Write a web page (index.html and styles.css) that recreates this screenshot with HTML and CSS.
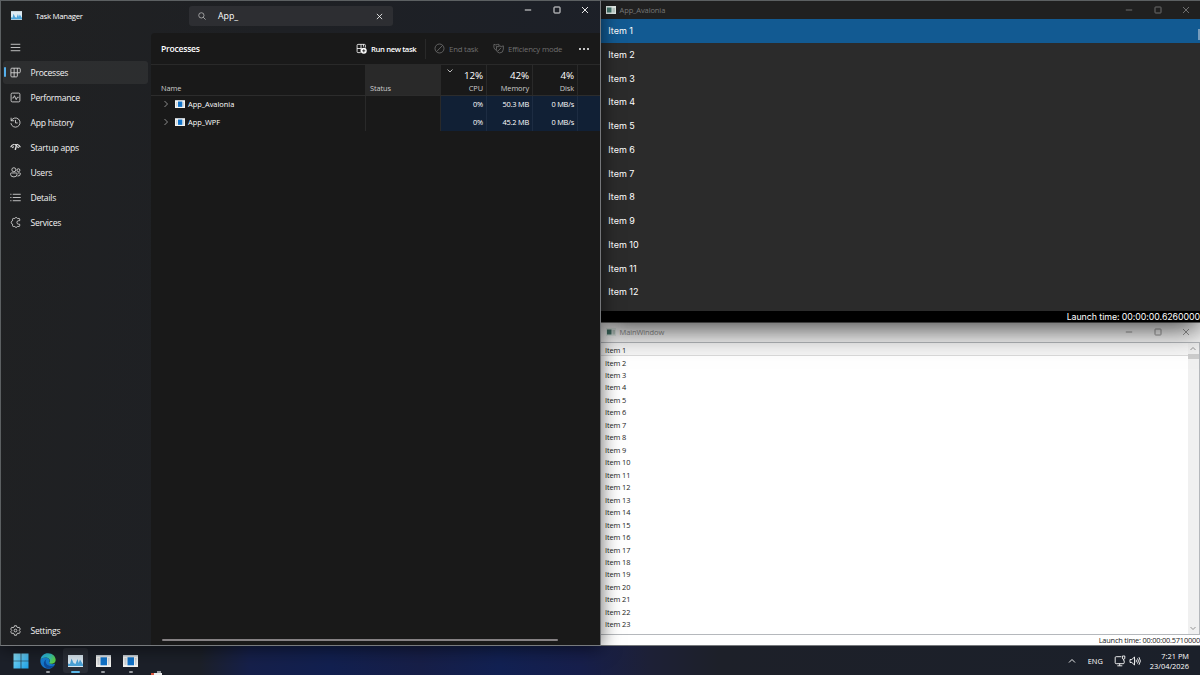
FILE: index.html
```html
<!DOCTYPE html>
<html lang="en">
<head>
  <meta charset="UTF-8" />
  <meta name="viewport" content="width=device-width, initial-scale=1.0"/>
  <title>Desktop</title>
  <link rel="stylesheet" href="styles.css">
</head>
<body>
  <svg class="defs" width="0" height="0">
    <symbol id="min" viewBox="0 0 8 8"><path d="M.8 4h6.400"/></symbol>
    <symbol id="max" viewBox="0 0 8 8"><rect x="1" y="1" width="6" height="6" rx=".6"/></symbol>
    <symbol id="close" viewBox="0 0 8 8"><path d="M1 1l6 6M7 1L1 7"/></symbol>
    <symbol id="chev" viewBox="0 0 8 8"><path d="M2.500 1L5.500 4 2.500 7"/></symbol>
    <symbol id="app" viewBox="0 0 15 12">
      <rect width="15" height="12" fill="#f4f4f2"/><rect width="15" height="1.500" fill="#c3cad0"/>
      <rect x="1.500" y="3" width="2" height="7" fill="#cfd4d8"/><rect x="12" y="3" width="1.500" height="7" fill="#cfd4d8"/>
      <rect x="4.500" y="2.300" width="6.500" height="8" fill="#1173c9"/>
    </symbol>
    <symbol id="chart" viewBox="0 0 15 12">
      <rect width="15" height="12" fill="#dceaf3"/>
      <path d="M0 11V8.500l2 .5 1.500-5.500L5.500 8 7.500 9l2-5 1.200 4L12 4.500l3 5V11z" fill="#4ba3d8"/>
    </symbol>
    <symbol id="win" viewBox="0 0 10 8">
      <rect width="10" height="8" fill="#dfe8e4"/><rect x="1" y="1.500" width="4.500" height="5" fill="#44756a"/>
      <rect x="6.500" y="2" width="2.500" height="4.500" fill="#b9c8c2"/>
    </symbol>
  </svg>

  <div class="desktop">
    <div class="window task-manager">
      <div class="tm-titlebar">
        <svg class="tm-logo"><use href="#chart"/></svg>
        <span class="tm-title">Task Manager</span>
        <div class="search">
          <svg class="icon" viewBox="0 0 10 10"><circle cx="4.200" cy="4.200" r="3.300"/><path d="M6.500 6.500L9.500 9.500"/></svg>
          <span>App_</span>
          <svg class="clear"><use href="#close"/></svg>
        </div>
        <div class="controls">
          <svg><use href="#min"/></svg>
          <svg><use href="#max"/></svg>
          <svg><use href="#close"/></svg>
        </div>
      </div>

      <div class="tm-body">
        <nav class="sidebar">
          <div class="nav-item menu">
            <svg class="icon" viewBox="0 0 12 12"><path d="M.8 2.500h10.400M.8 6h10.400M.8 9.500h10.400"/></svg>
          </div>
          <div class="nav-item active">
            <svg class="icon" viewBox="0 0 12 12"><path d="M2 1.300h8.200q1 0 1 1v3q0 1-1 1H8v3.500q0 1-1 1H2q-1 0-1-1V2.300q0-1 1-1zM4.500 1.300v9.500M8 1.300v5M1 6.300h7"/></svg>
            <span>Processes</span>
          </div>
          <div class="nav-item">
            <svg class="icon" viewBox="0 0 12 12"><rect x="1.200" y="1.200" width="9.600" height="9.600" rx="1.300"/><path d="M2.500 6.500h1.300l1-2.500 2 4.300 1.200-2.500h1.500"/></svg>
            <span>Performance</span>
          </div>
          <div class="nav-item">
            <svg class="icon" viewBox="0 0 12 12"><path d="M1.200.8v3.300h3.300M1.400 4A5 5 0 1 1 1 6.700M6 3.300v3.200h2.400"/></svg>
            <span>App history</span>
          </div>
          <div class="nav-item">
            <svg class="icon" viewBox="0 0 12 12"><path d="M.7 5.800A5.500 5.500 0 0 1 4.300 2.500M7.600 2.500a5.500 5.500 0 0 1 3.700 3.300M2.500 6.200l1.500-1.200M9.500 6.200L8 5" stroke-width="1.300"/><path d="M4 2.400Q5.900 1.700 8 2.400L6.700 8.200Q5.700 9.500 5 8.200L6.200 4z" fill="currentColor" stroke="none"/></svg>
            <span>Startup apps</span>
          </div>
          <div class="nav-item">
            <svg class="icon" viewBox="0 0 12 12"><circle cx="4.200" cy="3" r="2.200"/><circle cx="9.200" cy="3.500" r="1.600"/><path d="M1.500 6.500h5.300q.9 0 .9.900v.6q0 2.800-3.500 2.800T.6 8v-.6q0-.9.900-.9zM8.500 6.500h2.100q.8 0 .8.800 0 2.700-3.200 2.600"/></svg>
            <span>Users</span>
          </div>
          <div class="nav-item">
            <svg class="icon" viewBox="0 0 12 12"><path d="M3 2.500h8.700M3 6h8.700M3 9.500h8.700M.3 2.500h1.300M.3 6h1.300M.3 9.500h1.300"/></svg>
            <span>Details</span>
          </div>
          <div class="nav-item">
            <svg class="icon" viewBox="0 0 12 12"><path d="M10.600 4V2.400q0-.8-.8-.8H8.200a1.700 1.700 0 0 0-3.100 0H3.600q-.8 0-.8.800v1.700a1.900 1.900 0 0 0 0 3.700v1.700q0 .8.800.8h1.500a1.700 1.700 0 0 0 3.100 0h1.600q.8 0 .8-.8V7.900H9.500a1.900 1.900 0 0 1 0-3.900z"/></svg>
            <span>Services</span>
          </div>
          <div class="nav-item settings">
            <svg class="icon" viewBox="0 0 12 12"><path d="M4.900.8h2.200l.4 1.500 1.100.6 1.500-.4 1.100 1.900L10.100 6l1.100 1.400-1.100 1.900-1.500-.4-1.100.7-.4 1.600H4.900l-.4-1.600-1.100-.7-1.500.4L.8 7.400 1.900 6 .8 4.400l1.100-1.900 1.500.4 1.100-.6z"/><circle cx="6" cy="6" r="1.500"/></svg>
            <span>Settings</span>
          </div>
        </nav>

        <main class="content">
          <div class="toolbar">
            <h1>Processes</h1>
            <div class="tool run">
              <svg class="icon" viewBox="0 0 12 12"><path d="M5 10.500H2.200q-1 0-1-1v-7q0-1 1-1h7q1 0 1 1V5M5.500 1.500v9M1.200 6h5M8.200 1.500V4"/><circle cx="8.500" cy="8.500" r="3.200" fill="#fff" stroke="none"/><path d="M8.500 6.800v3.400M6.800 8.500h3.400" stroke="#191919"/></svg>
              <span>Run new task</span>
            </div>
            <div class="tool end">
              <svg class="icon" viewBox="0 0 12 12"><circle cx="6" cy="6" r="4.900"/><path d="M2.700 9.500l6.800-7"/></svg>
              <span>End task</span>
            </div>
            <div class="tool eff">
              <svg class="icon" viewBox="0 0 12 12"><path d="M1 1.500q2 1.200 4 0h1.500v2M1 1.500v3.200Q1.200 7 3.800 8M3.800 3.700q2 1 3.500-.4 2 1 4-.2v3.600q0 4-4 4.200-3.500-.5-3.500-4zM5.500 8.700l3.300-3.500"/></svg>
              <span>Efficiency mode</span>
            </div>
            <div class="more"><i></i><i></i><i></i></div>
          </div>

          <div class="grid head">
            <div>Name</div>
            <div class="status">Status</div>
            <div class="num"><svg class="sort" viewBox="0 0 8 6"><path d="M1.500 1.500L4 4l2.500-2.500"/></svg><b>12%</b>CPU</div>
            <div class="num"><b>42%</b>Memory</div>
            <div class="num"><b>4%</b>Disk</div>
            <div></div>
          </div>
          <div class="grid row">
            <div class="name"><svg class="expand"><use href="#chev"/></svg><svg class="proc"><use href="#app"/></svg>App_Avalonia</div>
            <div></div>
            <div class="num">0%</div>
            <div class="num">50.3 MB</div>
            <div class="num">0 MB/s</div>
            <div class="num"></div>
          </div>
          <div class="grid row">
            <div class="name"><svg class="expand"><use href="#chev"/></svg><svg class="proc"><use href="#app"/></svg>App_WPF</div>
            <div></div>
            <div class="num">0%</div>
            <div class="num">45.2 MB</div>
            <div class="num">0 MB/s</div>
            <div class="num"></div>
          </div>
          <div class="hscroll"></div>
        </main>
      </div>
    </div>

    <div class="window avalonia">
      <div class="titlebar">
        <svg class="app-icon"><use href="#win"/></svg>
        <span>App_Avalonia</span>
        <div class="controls">
          <svg><use href="#min"/></svg>
          <svg><use href="#max"/></svg>
          <svg><use href="#close"/></svg>
        </div>
      </div>
      <ul class="list">
        <li class="selected">Item 1</li>
        <li>Item 2</li>
        <li>Item 3</li>
        <li>Item 4</li>
        <li>Item 5</li>
        <li>Item 6</li>
        <li>Item 7</li>
        <li>Item 8</li>
        <li>Item 9</li>
        <li>Item 10</li>
        <li>Item 11</li>
        <li>Item 12</li>
      </ul>
      <div class="launch"><span>Launch time: 00:00:00.6260000</span></div>
      <div class="thumb"></div>
    </div>

    <div class="window wpf">
      <div class="titlebar">
        <svg class="app-icon"><use href="#win"/></svg>
        <span>MainWindow</span>
        <div class="controls">
          <svg><use href="#min"/></svg>
          <svg><use href="#max"/></svg>
          <svg><use href="#close"/></svg>
        </div>
      </div>
      <div class="list-box">
        <ul class="list">
          <li class="selected">Item 1</li>
          <li>Item 2</li>
          <li>Item 3</li>
          <li>Item 4</li>
          <li>Item 5</li>
          <li>Item 6</li>
          <li>Item 7</li>
          <li>Item 8</li>
          <li>Item 9</li>
          <li>Item 10</li>
          <li>Item 11</li>
          <li>Item 12</li>
          <li>Item 13</li>
          <li>Item 14</li>
          <li>Item 15</li>
          <li>Item 16</li>
          <li>Item 17</li>
          <li>Item 18</li>
          <li>Item 19</li>
          <li>Item 20</li>
          <li>Item 21</li>
          <li>Item 22</li>
          <li>Item 23</li>
        </ul>
        <div class="vscroll">
          <svg viewBox="0 0 10 10"><path d="M2.500 6.500L5 4l2.500 2.500"/></svg>
          <div class="bar"></div>
          <svg viewBox="0 0 10 10"><path d="M2.500 3.500L5 6l2.500-2.500"/></svg>
        </div>
      </div>
      <div class="launch"><span>Launch time: 00:00:00.5710000</span></div>
    </div>

    <footer class="taskbar">
      <div class="task">
        <svg class="start" viewBox="0 0 16 16">
          <defs><linearGradient id="wg" x2="1" y2="1"><stop stop-color="#8be3fb"/><stop offset="1" stop-color="#1b9fe6"/></linearGradient></defs>
          <path d="M.5.500h7.200v7.200H.5zM8.300.500h7.200v7.200H8.300zM.5 8.300h7.200v7.200H.5zM8.300 8.300h7.200v7.200H8.300z" fill="url(#wg)"/>
        </svg>
      </div>
      <div class="task open">
        <svg class="edge" viewBox="0 0 16 16">
          <defs>
            <linearGradient id="eg" x2="1" y2=".4"><stop stop-color="#25a9e8"/><stop offset=".6" stop-color="#35c7c2"/><stop offset="1" stop-color="#5bd34c"/></linearGradient>
            <linearGradient id="eb" y2="1" x2="0"><stop stop-color="#1685d8"/><stop offset="1" stop-color="#1470c8"/></linearGradient>
          </defs>
          <path d="M.4 7.200C1.500 5 4 4.200 6.500 4.700 9 5.200 10 7 9.600 8.200 9 9 9.300 10 10 10.600c1.500 1 3.800.7 5.200-.2C14.300 13.500 11.500 15.700 8 15.700 3.500 15.700 0 12 .4 7.200z" fill="url(#eb)"/>
          <path d="M.4 7.200C.9 3 4 .3 8 .3c4.600 0 7.700 3.200 7.700 6.700 0 2.400-1.900 3.800-4 3.800-1.600 0-2.500-.6-2.500-1.100 0-.4.700-.7.700-2C9.900 6 8 4.600 5.700 4.600 3 4.600 1 5.800.4 7.200z" fill="url(#eg)"/>
          <path d="M6.600 6.200c-2 2-.6 5.700 2.700 6.500 2 .6 3.800.2 4.800-.4-1.500 2.300-3.800 3.300-5.500 3.300-3-.3-4.800-2.500-4.800-5 0-2 1.200-3.700 2.800-4.400z" fill="#0d4d9c"/>
        </svg>
      </div>
      <div class="task open current"><svg class="pic"><use href="#chart"/></svg></div>
      <div class="task open"><svg class="pic"><use href="#app"/></svg></div>
      <div class="task open"><svg class="pic"><use href="#app"/></svg></div>
      <div class="peek"><i></i><i></i></div>
      <div class="tray">
        <svg class="icon up" viewBox="0 0 10 10"><path d="M2 6.500l3-3 3 3"/></svg>
        <span class="lang">ENG</span>
        <svg class="icon net" viewBox="0 0 12 12"><path d="M7.300 1.700H2.200q-1 0-1 1v5q0 1 1 1h7q1 0 1-1V5.400M5.700 8.700v2M3.300 10.800h5M8.400 1h2.400v2.200q0 1-1.200 1t-1.200-1zM9.600 4.200v1.500"/></svg>
        <svg class="icon vol" viewBox="0 0 12 12"><path d="M1 4.500h1.800L5.500 2v8L2.800 7.500H1zM7 4.700q.9 1.300 0 2.600M8.500 3.400q1.900 2.600 0 5.200M10 2.200q2.800 3.800 0 7.600"/></svg>
        <div class="clock"><div>7:21 PM</div><div>23/04/2026</div></div>
      </div>
    </footer>
  </div>
</body>
</html>
```
FILE: styles.css
```css
* {
  box-sizing: border-box;
}

body {
  margin: 0;
  background: #1c2029;
  font-family: "Open Sans", "Noto Sans", sans-serif;
  font-size: 8.6px;
  color: #fff;
}

h1,
ul {
  margin: 0;
  padding: 0;
  list-style: none;
}

svg {
  display: block;
  flex: none;
  fill: none;
  stroke: currentColor;
  stroke-width: 0.9;
}

.defs {
  position: absolute;
}

.desktop {
  position: relative;
  width: 1200px;
  height: 675px;
  overflow: hidden;
}

.window {
  position: absolute;
  display: flex;
  flex-direction: column;
}

.controls {
  display: flex;
  gap: 20.4px;
  margin-left: auto;
}

.controls svg {
  width: 8px;
  height: 8px;
}

/* Task Manager */
.task-manager {
  left: 0;
  top: 0;
  z-index: 2;
  width: 601px;
  height: 646px;
  border: 1px solid #5c6062;
  border-right-color: #75777a;
  border-bottom-color: #777a7d;
  background: linear-gradient(100deg, #202122, #1e2024 40%, #1c2029);
  box-shadow: 0 2px 18px rgba(0, 0, 0, 0.6);
}

.tm-titlebar {
  display: flex;
  align-items: center;
  height: 32px;
  padding: 0 11px 2px 10px;
}

.tm-logo {
  width: 11px;
  height: 9px;
  margin-top: -1px;
  stroke: none;
}

.tm-title {
  width: 153px;
  padding-left: 13.500px;
  font-size: 7.8px;
  letter-spacing: -0.3px;
}

.search {
  display: flex;
  align-items: center;
  width: 204px;
  height: 20px;
  margin-left: 14px;
  padding: 0 10px 0 9px;
  border-radius: 3px;
  background: #2d2e32;
}

.search .icon {
  width: 8px;
  height: 8px;
  color: #c4c4c4;
}

.search span {
  padding-left: 12px;
  font-size: 8.8px;
}

.search .clear {
  width: 7px;
  height: 7px;
  margin-left: auto;
}

.tm-titlebar .controls {
  margin-top: -13px;
}

.tm-body {
  display: flex;
  flex: 1;
}

.sidebar {
  display: flex;
  flex-direction: column;
  width: 150px;
  padding: 2px 3px 2px 2px;
}

.nav-item {
  position: relative;
  display: flex;
  align-items: center;
  gap: 9.5px;
  height: 25px;
  padding-left: 7px;
  font-size: 8.6px;
  letter-spacing: -0.25px;
  color: #f3f3f3;
}

.nav-item span {
  padding-top: 1.500px;
}

.nav-item .icon {
  width: 11px;
  height: 11px;
  color: #e0e0e0;
}

.nav-item.active::before {
  content: "";
  position: absolute;
  inset: 1px 0;
  border-radius: 3px;
  background: rgba(255, 255, 255, 0.06);
}

.nav-item.active::after {
  content: "";
  position: absolute;
  left: 1px;
  top: 7px;
  width: 2px;
  height: 10px;
  border-radius: 1px;
  background: #55b0ec;
}

.nav-item.settings {
  margin-top: auto;
}

.content {
  display: flex;
  flex-direction: column;
  flex: 1;
  border-top-left-radius: 4px;
  background: #191919;
}

.toolbar {
  display: flex;
  align-items: center;
  height: 32px;
  padding: 0 11px 0 10px;
  border-bottom: 1px solid #292929;
}

.toolbar h1 {
  width: 195px;
  font-size: 8.6px;
  font-weight: 600;
  letter-spacing: -0.25px;
}

.tool {
  display: flex;
  align-items: center;
  gap: 4px;
  white-space: nowrap;
  font-size: 7.8px;
  letter-spacing: -0.2px;
  color: #6f6f6f;
}

.tool .icon {
  width: 11px;
  height: 11px;
}

.run {
  width: 69px;
  font-size: 7.7px;
  font-weight: 600;
  letter-spacing: -0.38px;
  color: #fff;
}

.end {
  width: 68px;
  height: 20px;
  padding-left: 8px;
  border-left: 1px solid #292929;
}

.more {
  display: flex;
  gap: 2px;
  margin-left: auto;
}

.more i {
  width: 2px;
  height: 2px;
  border-radius: 50%;
  background: #fff;
}

.grid {
  display: grid;
  grid-template-columns: 215px 75px 46px 46px 45px 1fr;
  font-size: 7.4px;
  letter-spacing: -0.1px;
}

.grid > div {
  border-right: 1px solid #292929;
}

.grid > div:last-child {
  border-right: 0;
}

.head {
  height: 31px;
  border-bottom: 1px solid #2c2c2c;
  color: #ccc;
}

.head > div {
  display: flex;
  flex-direction: column;
  justify-content: flex-end;
  padding: 0 4px 2.500px;
}

.head > div:first-child {
  padding-left: 10px;
}

.head .status {
  background: #292929;
}

.head .num {
  position: relative;
  align-items: flex-end;
  padding-right: 3px;
  line-height: 10px;
}

.head b {
  margin-bottom: 1px;
  font-size: 9.8px;
  font-weight: 400;
  line-height: 12px;
  color: #fff;
}

.sort {
  position: absolute;
  left: 5px;
  top: 3px;
  width: 8px;
  height: 6px;
}

.row {
  height: 17.500px;
}

.row > div {
  display: flex;
  align-items: center;
  padding-bottom: 1px;
}

.row .name {
  padding-left: 10.500px;
  letter-spacing: 0;
}

.row .num {
  justify-content: flex-end;
  padding-right: 3px;
  letter-spacing: -0.2px;
  background: #112035;
  border-right-color: #1d2c42;
}

.expand {
  width: 8px;
  height: 8px;
  margin-right: 5.5px;
  color: #999;
}

.proc {
  width: 10px;
  height: 8px;
  margin-right: 3px;
  stroke: none;
}

.hscroll {
  width: 396px;
  height: 2px;
  margin: auto 0 4px 11px;
  border-radius: 1px;
  background: #858183;
}

/* Plain app windows */
.titlebar {
  display: flex;
  align-items: center;
  flex: none;
  padding: 0 10px 0 4.500px;
  font-size: 7.5px;
  letter-spacing: -0.1px;
}

.app-icon {
  width: 10px;
  height: 8px;
  margin-right: 4px;
  stroke: none;
}

.avalonia {
  left: 601px;
  top: 0;
  z-index: 1;
  width: 599px;
  height: 322px;
  border-top: 1px solid #5c6062;
  background: #2b2b2b;
  box-shadow: 0 5px 28px rgba(0, 0, 0, 0.8);
  font-family: Inter, sans-serif;
}

.avalonia .titlebar {
  height: 18px;
  background: #202020;
  font-family: "Open Sans", sans-serif;
  color: #777;
}

.avalonia .list {
  flex: 1;
}

.avalonia li {
  height: 23.780px;
  padding-left: 7.3px;
  font-size: 9px;
  line-height: 24px;
}

.avalonia .selected {
  background: #125a92;
}

.launch {
  display: flex;
  justify-content: flex-end;
  flex: none;
  white-space: nowrap;
}

.avalonia .launch {
  height: 11px;
  background: #000;
  font-size: 8.8px;
  letter-spacing: -0.05px;
  line-height: 12px;
}

.thumb {
  position: absolute;
  right: 0;
  top: 28px;
  width: 2px;
  height: 11px;
  background: #779dbd;
}

.wpf {
  left: 601px;
  top: 322px;
  width: 599px;
  height: 324px;
  border-top: 1px solid #777;
  border-bottom: 1px solid #777a7d;
  background: #fff;
  color: #222;
}

.wpf .titlebar {
  height: 19px;
  padding-bottom: 1px;
  background: #f3f3f3;
  color: #8b8b8b;
}

.list-box {
  display: flex;
  flex: 1;
  border-top: 1px solid #b5b8bc;
  border-bottom: 1px solid #b5b8bc;
}

.wpf .list {
  flex: 1;
}

.wpf li {
  height: 12.480px;
  padding-left: 4px;
  font-size: 7.4px;
  letter-spacing: -0.1px;
  line-height: 15px;
}

.wpf .selected {
  height: 13px;
  margin-bottom: -0.5px;
  border-bottom: 1px solid #dadada;
  background: #f6f6f6;
}

.vscroll {
  display: flex;
  flex-direction: column;
  width: 12px;
  border-right: 1px solid #b5b8bc;
  background: #f0f0f0;
  color: #888;
}

.vscroll svg {
  width: 10px;
  height: 11px;
}

.vscroll svg:last-child {
  margin-top: auto;
}

.vscroll .bar {
  height: 5px;
  background: #cdcdcd;
}

.wpf .launch {
  height: 10px;
  font-size: 7.4px;
  letter-spacing: -0.2px;
  line-height: 11px;
}

/* Taskbar */
.taskbar {
  position: absolute;
  left: 0;
  right: 0;
  bottom: 0;
  display: flex;
  align-items: flex-start;
  height: 29px;
  padding: 2px 11px 0 8px;
  background: linear-gradient(90deg, #1c2029 0, #1c2029 200px, #16204b 250px, #122050 330px, #171f48 420px, #122153 500px, #171f4c 580px, #1d2036 650px, #1d2029 720px, #1b202a 1200px);
}

.task {
  position: relative;
  display: flex;
  align-items: center;
  justify-content: center;
  width: 25px;
  height: 25px;
  margin-right: 2.600px;
  border-radius: 3px;
}

.task svg {
  stroke: none;
}

.start,
.edge {
  width: 16px;
  height: 16px;
}

.pic {
  width: 15px;
  height: 12px;
}

.open::after {
  content: "";
  position: absolute;
  bottom: 0;
  width: 4px;
  height: 2px;
  border-radius: 1px;
  background: #999ca2;
}

.current {
  background: #2a2e37;
}

.current::after {
  width: 9px;
  background: #5cb8e8;
}

.peek {
  display: flex;
  flex-direction: column;
  align-self: flex-end;
  margin-left: 5px;
}

.peek i {
  width: 4px;
  height: 2px;
  margin-left: 6px;
  background: #999ca2;
}

.peek i:last-child {
  width: 11px;
  margin-left: 0;
  border-left: 3px solid #d9583f;
  background: #eee;
}

.tray {
  display: flex;
  align-items: center;
  height: 27px;
  margin-top: -1px;
  margin-left: auto;
  font-size: 7.4px;
}

.up {
  width: 10px;
  height: 10px;
}

.lang {
  padding: 1px 11px 0;
}

.net {
  width: 12px;
  height: 12px;
  margin-right: 3px;
}

.vol {
  width: 12px;
  height: 12px;
}

.clock {
  padding-left: 9px;
  line-height: 10px;
  text-align: right;
}
```
